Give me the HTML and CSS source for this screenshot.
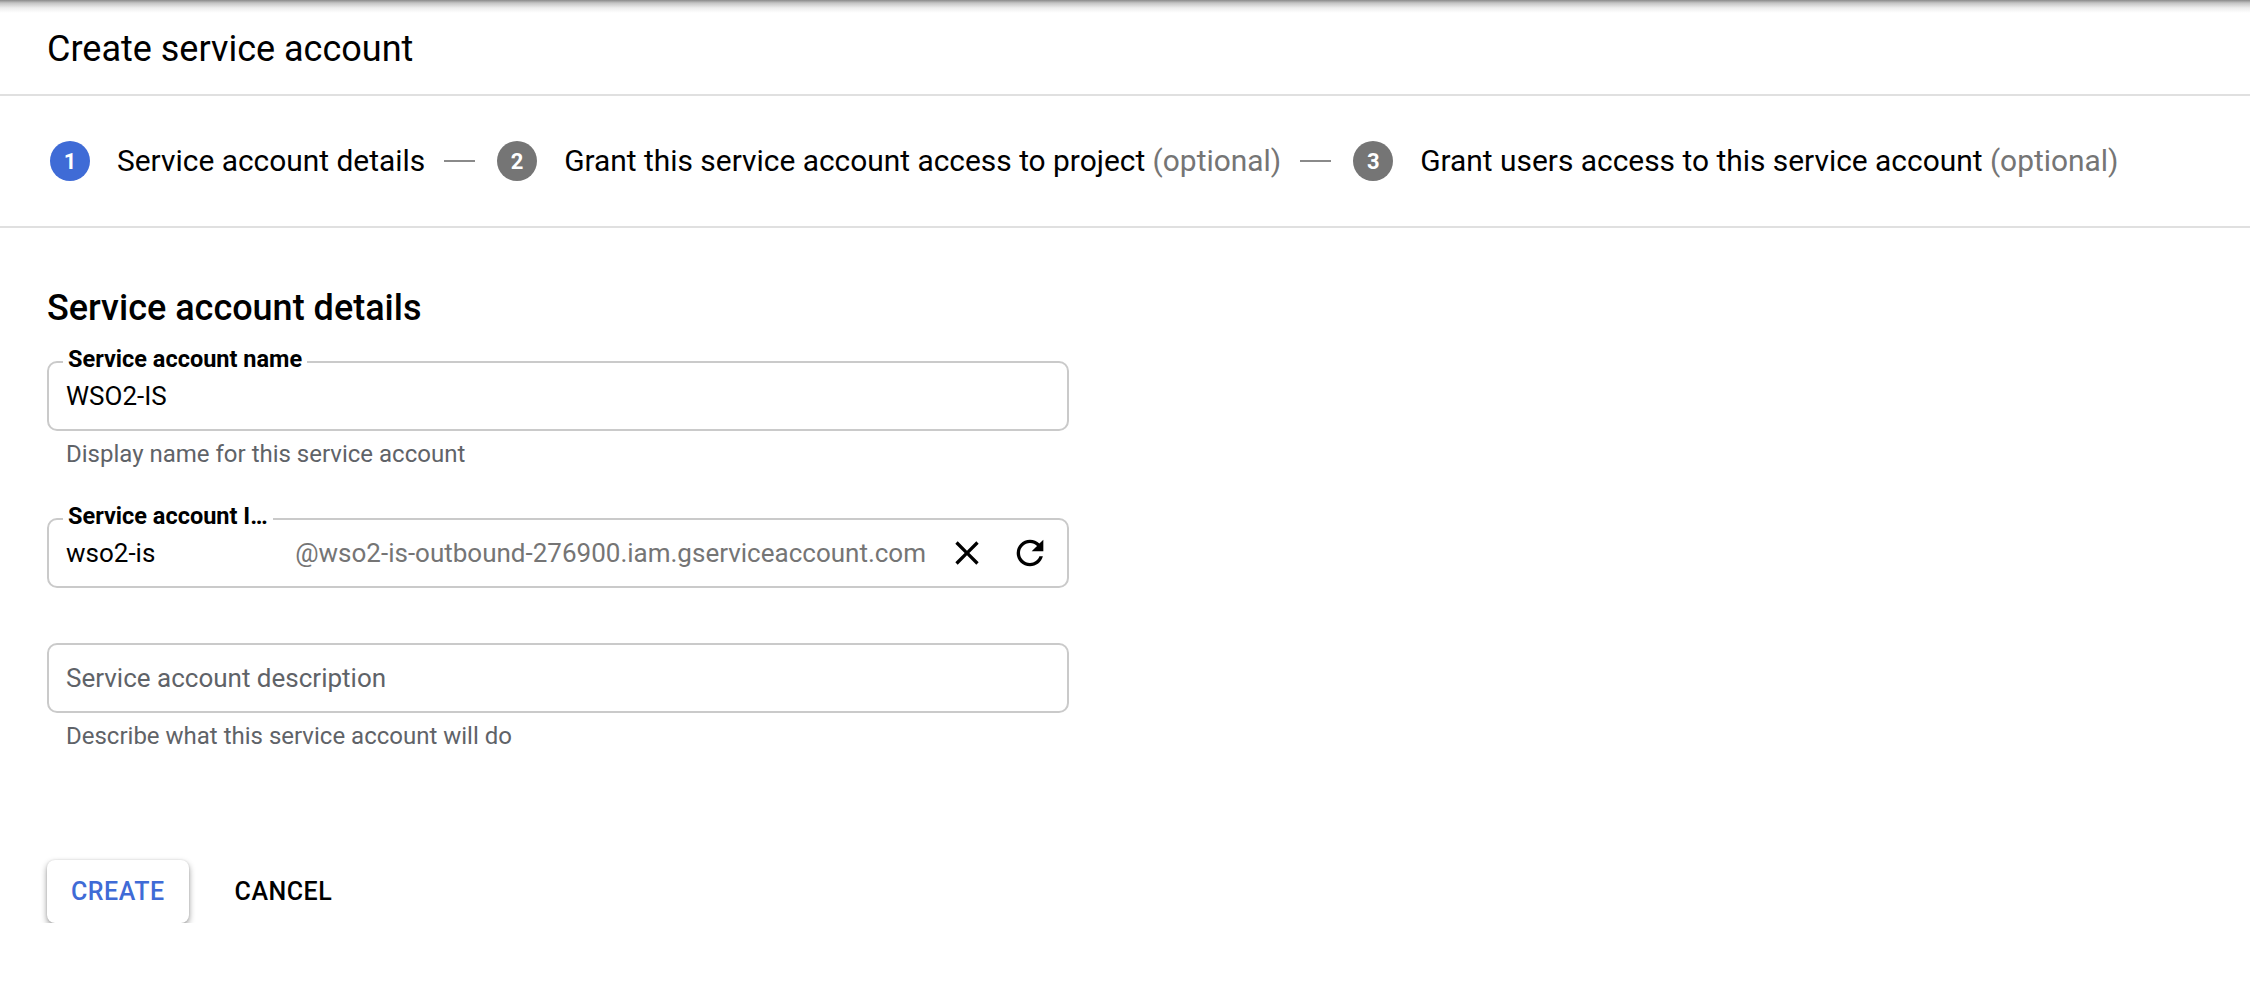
FILE: index.html
```html
<!DOCTYPE html>
<html lang="en">
<head>
<meta charset="utf-8">
<title>Create service account</title>
<link rel="stylesheet" href="styles.css">
</head>
<body>
<header class="header">
  <h1 class="title">Create service account</h1>
</header>
<nav class="stepper">
  <div class="step">
    <span class="num num-active">1</span>
    <span class="step-label">Service account details</span>
  </div>
  <span class="dash"></span>
  <div class="step">
    <span class="num">2</span>
    <span class="step-label">Grant this service account access to project <span class="opt">(optional)</span></span>
  </div>
  <span class="dash"></span>
  <div class="step">
    <span class="num">3</span>
    <span class="step-label">Grant users access to this service account <span class="opt">(optional)</span></span>
  </div>
</nav>
<main class="content">
  <h2 class="heading">Service account details</h2>

  <div class="field field-first">
    <span class="field-label">Service account name</span>
    <span class="value">WSO2-IS</span>
  </div>
  <div class="helper">Display name for this service account</div>

  <div class="field field-second">
    <span class="field-label">Service account I…</span>
    <span class="value value-id">wso2-is</span>
    <span class="suffix">@wso2-is-outbound-276900.iam.gserviceaccount.com</span>
    <span class="icon-btn">
      <svg viewBox="0 0 24 24" width="40" height="40"><path d="M19 6.41L17.59 5 12 10.59 6.41 5 5 6.41 10.59 12 5 17.59 6.41 19 12 13.41 17.59 19 19 17.59 13.41 12z"/></svg>
    </span>
    <span class="icon-btn">
      <svg viewBox="0 0 24 24" width="40" height="40"><path d="M17.65 6.35C16.2 4.9 14.21 4 12 4c-4.42 0-7.99 3.58-7.990 8s3.57 8 7.99 8c3.73 0 6.84-2.55 7.73-6h-2.08c-.82 2.33-3.04 4-5.65 4-3.31 0-6-2.69-6-6s2.69-6 6-6c1.66 0 3.14.69 4.22 1.78L13 11h7V4l-2.35 2.35z"/></svg>
    </span>
  </div>

  <div class="field field-third">
    <span class="placeholder">Service account description</span>
  </div>
  <div class="helper">Describe what this service account will do</div>

  <div class="actions">
    <button class="btn btn-raised">CREATE</button>
    <button class="btn btn-flat">CANCEL</button>
  </div>
</main>
</body>
</html>
```
FILE: styles.css
```css
* { box-sizing: border-box; }

body {
  margin: 0;
  background: #fff;
  font-family: Roboto, "Noto Sans", "Liberation Sans", sans-serif;
  color: #000;
}

.header {
  height: 96px;
  display: flex;
  align-items: center;
  padding-left: 47px;
  background-color: #fff;
  background-image: linear-gradient(#8a8a8a 0, #c4c4c4 3px, #eeeeee 8px, #ffffff 13px);
  background-size: 100% 13px;
  background-repeat: no-repeat;
  border-bottom: 2px solid #e0e0e0;
}

.title {
  margin: 4px 0 0;
  font-size: 36px;
  font-weight: 400;
  line-height: 40px;
}

.stepper {
  height: 132px;
  display: flex;
  align-items: center;
  padding-left: 50px;
  border-bottom: 2px solid #e0e0e0;
}

.step {
  display: flex;
  align-items: center;
}

.num {
  width: 40px;
  height: 40px;
  border-radius: 50%;
  background: #757575;
  color: #fff;
  font-size: 22px;
  font-weight: 700;
  display: flex;
  align-items: center;
  justify-content: center;
  margin-right: 27px;
}

.num-active { background: #3f6bd6; }

.step-label {
  font-size: 29.9px;
  line-height: 36px;
  white-space: nowrap;
}

.opt { color: #757575; }

.dash {
  width: 31px;
  border-top: 2px solid #8a8a8a;
  margin: 0 22px 0 19px;
}

.content {
  padding-left: 47px;
}

.heading {
  margin: 60px 0 0;
  font-size: 36px;
  line-height: 40px;
  font-weight: 500;
}

.field {
  position: relative;
  width: 1022px;
  height: 70px;
  border: 2px solid #cacaca;
  border-radius: 10px;
  display: flex;
  align-items: center;
  padding: 0 17px 0 17px;
}

.field-first { margin-top: 33px; }
.field-second { margin-top: 51px; }
.field-third { margin-top: 55px; }

.field-label {
  position: absolute;
  top: -17px;
  left: 14px;
  padding: 0 5px;
  background: #fff;
  font-size: 23.5px;
  line-height: 26px;
  font-weight: 700;
  white-space: nowrap;
}

.value {
  font-size: 26px;
  line-height: 30px;
}

.value-id { width: 230px; }

.suffix {
  font-size: 26px;
  line-height: 30px;
  color: #757575;
  white-space: nowrap;
}

.placeholder {
  font-size: 26px;
  line-height: 30px;
  color: #5f6368;
}

.icon-btn {
  width: 40px;
  height: 40px;
  display: flex;
  margin-left: 21px;
}
.icon-btn + .icon-btn { margin-left: 23px; }
.icon-btn svg { fill: #000; display: block; }

.helper {
  margin-top: 10px;
  padding-left: 19px;
  font-size: 24px;
  line-height: 26px;
  color: #5f6368;
}

.actions {
  margin-top: 111px;
  display: flex;
  align-items: center;
  gap: 22px;
}

.btn {
  height: 63px;
  padding: 0 24px;
  border: none;
  border-radius: 8px;
  font-family: Roboto, "Noto Sans", sans-serif;
  font-size: 25px;
  font-weight: 500;
  letter-spacing: 0.5px;
  background: transparent;
}

.btn-raised {
  background: #fff;
  color: #3f6bd6;
  box-shadow: 0 3px 6px rgba(0, 0, 0, 0.4), 0 0 2px rgba(0, 0, 0, 0.12);
}

.btn-flat { color: #000; }
```
